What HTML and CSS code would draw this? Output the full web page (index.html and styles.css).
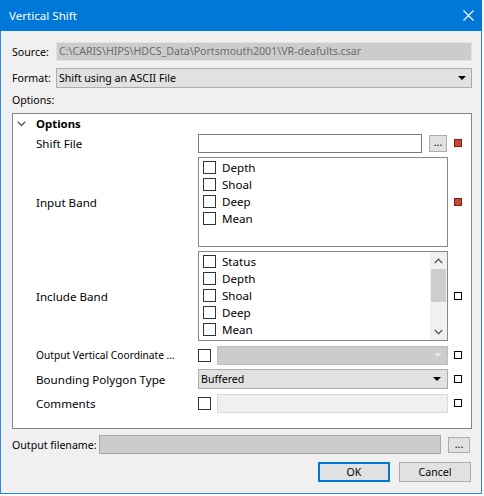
FILE: index.html
```html
<!DOCTYPE html>
<html>
<head>
<meta charset="utf-8">
<link rel="stylesheet" href="styles.css">
</head>
<body>
<div class="window">
  <div class="titlebar">
    <span class="title">Vertical Shift</span>
    <svg class="close" width="11" height="11" viewBox="0 0 11 11"><path d="M0.5 0.5L10.5 10.5M10.5 0.5L0.5 10.5" stroke="#fff" stroke-width="1.1" fill="none"/></svg>
  </div>
  <div class="content">
    <div class="form-row row-source">
      <div class="lbl">Source:</div>
      <div class="field-disabled">C:\CARIS\HIPS\HDCS_Data\Portsmouth2001\VR-deafults.csar</div>
    </div>
    <div class="form-row row-format">
      <div class="lbl">Format:</div>
      <div class="combo format-combo"><span>Shift using an ASCII File</span><svg width="8" height="4" viewBox="0 0 8 4"><path d="M0 0H8L4 4Z" fill="#000"/></svg></div>
    </div>
    <div class="options-label">Options:</div>
    <div class="panel">
      <div class="panel-head">
        <svg class="chev" width="9" height="6" viewBox="0 0 9 6"><path d="M0.8 0.8L4.5 4.5L8.2 0.8" stroke="#555" stroke-width="1.3" fill="none"/></svg>
        <span>Options</span>
      </div>
      <div class="prop-grid">
        <div class="prop-label">Shift File</div>
        <div class="prop-value shift-value">
          <div class="textbox"></div>
          <div class="dots-btn shift-btn">...</div>
        </div>
        <div class="marker required"></div>

        <div class="prop-label">Input Band</div>
        <div class="checklist">
          <div class="items">
            <div class="item"><span class="cb"></span>Depth</div>
            <div class="item"><span class="cb"></span>Shoal</div>
            <div class="item"><span class="cb"></span>Deep</div>
            <div class="item"><span class="cb"></span>Mean</div>
          </div>
        </div>
        <div class="marker required"></div>

        <div class="prop-label">Include Band</div>
        <div class="checklist">
          <div class="items">
            <div class="item"><span class="cb"></span>Status</div>
            <div class="item"><span class="cb"></span>Depth</div>
            <div class="item"><span class="cb"></span>Shoal</div>
            <div class="item"><span class="cb"></span>Deep</div>
            <div class="item"><span class="cb"></span>Mean</div>
          </div>
          <div class="scrollbar">
            <div class="sb-btn"><svg width="9" height="6" viewBox="0 0 9 6"><path d="M0.8 5L4.5 1.2L8.2 5" stroke="#606060" stroke-width="1.4" fill="none"/></svg></div>
            <div class="sb-thumb"></div>
            <div class="sb-track"></div>
            <div class="sb-btn"><svg width="9" height="6" viewBox="0 0 9 6"><path d="M0.8 1L4.5 4.8L8.2 1" stroke="#606060" stroke-width="1.4" fill="none"/></svg></div>
          </div>
        </div>
        <div class="marker"></div>

        <div class="prop-label small">Output Vertical Coordinate ...</div>
        <div class="prop-value">
          <span class="cb"></span>
          <div class="combo combo-disabled"><span></span><svg width="8" height="4" viewBox="0 0 8 4"><path d="M0 0H8L4 4Z" fill="#e6e6e6"/></svg></div>
        </div>
        <div class="marker"></div>

        <div class="prop-label">Bounding Polygon Type</div>
        <div class="combo bp-combo"><span>Buffered</span><svg width="8" height="4" viewBox="0 0 8 4"><path d="M0 0H8L4 4Z" fill="#000"/></svg></div>
        <div class="marker"></div>

        <div class="prop-label">Comments</div>
        <div class="prop-value">
          <span class="cb"></span>
          <div class="textbox textbox-disabled"></div>
        </div>
        <div class="marker"></div>
      </div>
    </div>
    <div class="output-row">
      <div class="out-lbl">Output filename:</div>
      <div class="out-field"></div>
      <div class="dots-btn out-btn">...</div>
    </div>
    <div class="buttons">
      <div class="btn btn-default">OK</div>
      <div class="btn">Cancel</div>
    </div>
  </div>
</div>
</body>
</html>
```
FILE: styles.css
```css
body {
  margin: 0;
  background: #ffffff;
  font-family: "Noto Sans", "Liberation Sans", Arial, sans-serif;
  font-size: 10.6px;
  color: #000;
}

.window {
  width: 482px;
  height: 494px;
  box-sizing: border-box;
  border: 1px solid #2b88d8;
  border-top: none;
  background: #f0f0f0;
  display: flex;
  flex-direction: column;
}

.titlebar {
  height: 31px;
  margin: 0 -1px;
  background: #0078d7;
  color: #fff;
  display: flex;
  align-items: center;
  justify-content: space-between;
  padding: 0 8px 0 9px;
  flex: none;
}

.title {
  font-size: 11.6px;
}

.content {
  flex: 1;
  padding: 11px 9px 0 11px;
  display: flex;
  flex-direction: column;
}

.form-row {
  display: flex;
  align-items: center;
}

.lbl {
  width: 44px;
  flex: none;
  white-space: nowrap;
}

.row-source {
  height: 19px;
}

.field-disabled {
  flex: 1;
  height: 19px;
  box-sizing: border-box;
  background: #cccccc;
  border: 1px solid #e3e3e3;
  color: #6d6d6d;
  padding-left: 2px;
  line-height: 17px;
  white-space: nowrap;
  overflow: hidden;
}

.row-format {
  margin-top: 7px;
  height: 20px;
}

.combo {
  height: 20px;
  box-sizing: border-box;
  background: #e1e1e1;
  border: 1px solid #adadad;
  display: flex;
  align-items: center;
  justify-content: space-between;
  padding: 0 5px 0 2px;
  white-space: nowrap;
}

.format-combo {
  flex: 1;
}

.options-label {
  margin-top: 5px;
  height: 15px;
  line-height: 15px;
}

.panel {
  margin-top: 5px;
  height: 316px;
  box-sizing: border-box;
  border: 1px solid #828790;
  background: #fff;
  padding: 0 9px 15px 0;
  flex: none;
}

.panel-head {
  height: 19px;
  display: flex;
  align-items: center;
  padding-left: 4px;
  font-weight: bold;
  font-size: 11.4px;
}

.chev {
  margin-right: 10px;
}

.prop-grid {
  margin-left: 23px;
  display: grid;
  grid-template-columns: 162px 250px 14px;
  grid-template-rows: 20px 90px 90px 20px 20px 20px;
  row-gap: 4px;
  align-items: center;
}

.prop-label {
  white-space: nowrap;
  font-size: 11.6px;
}

.prop-label.small {
  font-size: 10.2px;
}

.prop-value {
  display: flex;
  align-items: center;
  gap: 6px;
}

.shift-value {
  gap: 7px;
  padding-right: 1px;
}

.textbox {
  flex: 1;
  height: 19px;
  box-sizing: border-box;
  border: 1px solid #7a7a7a;
  background: #fff;
}

.textbox-disabled {
  border-color: #d9d9d9;
  background: #f0f0f0;
}

.dots-btn {
  box-sizing: border-box;
  background: #e1e1e1;
  border: 1px solid #adadad;
  text-align: center;
  font-size: 10.6px;
  line-height: 13px;
  flex: none;
}

.shift-btn {
  width: 18px;
  height: 17px;
}

.marker {
  justify-self: end;
  width: 8px;
  height: 8px;
  box-sizing: border-box;
  border: 1px solid #000;
  background: #fff;
}

.marker.required {
  background: #c14b3a;
  border-color: #8b1a10;
}

.checklist {
  height: 90px;
  box-sizing: border-box;
  border: 1px solid #828790;
  background: #fff;
  display: flex;
  overflow: hidden;
}

.items {
  flex: 1;
  padding-top: 1px;
}

.item {
  height: 17px;
  display: flex;
  align-items: center;
  padding-left: 4px;
  font-size: 11.6px;
}

.cb {
  display: inline-block;
  width: 13px;
  height: 13px;
  box-sizing: border-box;
  border: 1px solid #333;
  background: #fff;
  flex: none;
}

.item .cb {
  margin-right: 6px;
}

.scrollbar {
  width: 17px;
  background: #f0f0f0;
  display: flex;
  flex-direction: column;
}

.sb-btn {
  height: 17px;
  display: flex;
  align-items: center;
  justify-content: center;
  flex: none;
}

.sb-thumb {
  height: 33px;
  margin: 0 1px;
  background: #cdcdcd;
  flex: none;
}

.sb-track {
  flex: 1;
}

.combo-disabled {
  flex: 1;
  height: 19px;
  background: #cccccc;
  border-color: #bfbfbf;
}

.bp-combo {
  padding-right: 6px;
}

.output-row {
  margin-top: 6px;
  height: 19px;
  display: flex;
  align-items: center;
}

.out-lbl {
  width: 87px;
  flex: none;
  white-space: nowrap;
}

.out-field {
  flex: 1;
  height: 19px;
  box-sizing: border-box;
  background: #cccccc;
  border: 1px solid #a8a8a8;
}

.out-btn {
  width: 22px;
  height: 16px;
  margin-left: 7px;
  margin-right: 2px;
}

.buttons {
  margin-top: 8px;
  display: flex;
  justify-content: flex-end;
  gap: 9px;
  padding-right: 1px;
}

.btn {
  width: 72px;
  height: 20px;
  box-sizing: border-box;
  background: #e1e1e1;
  border: 1px solid #adadad;
  display: flex;
  align-items: center;
  justify-content: center;
}

.btn-default {
  border: 2px solid #0078d7;
}
```
